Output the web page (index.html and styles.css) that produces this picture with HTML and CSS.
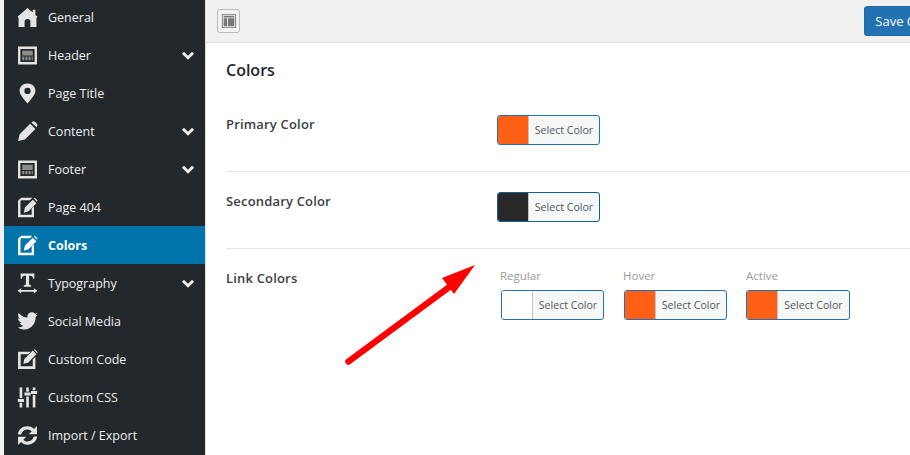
FILE: index.html
```html
<!DOCTYPE html>
<html lang="en">
<head>
<meta charset="utf-8">
<title>Colors</title>
<link rel="stylesheet" href="styles.css">
</head>
<body>
<div class="page">
  <nav class="sidebar">
    <a class="item"><svg class="icon" viewBox="0 0 20 20"><path d="M10 1 L15 5.300 V2.500 H17.500 V7.500 L19.500 9.300 L18.500 10.500 V19 H12.800 V14 Q12.800 11.500 10 11.500 Q7.200 11.500 7.200 14 V19 H1.500 V10.500 L.500 9.300 Z"/></svg><span class="name">General</span></a>
    <a class="item"><svg class="icon" viewBox="0 0 20 20"><path fill-rule="evenodd" d="M1 1.500 H19 V18.500 H1 Z M3.200 3.700 V16.300 H16.800 V3.700 Z"/><path class="dim" d="M5 5.500 H15 V10 H5 Z M5 11 H7 V14.500 H5 Z M8 11 H10 V14.500 H8 Z M11 11 H13 V14.500 H11 Z M14 11 H15 V14.500 H14 Z"/></svg><span class="name">Header</span><svg class="chev" viewBox="0 0 12 8"><path d="M1.500 1.500 L6 6 L10.500 1.500"/></svg></a>
    <a class="item"><svg class="icon" viewBox="0 0 20 20"><path fill-rule="evenodd" d="M10 .500 C5.500 .500 2.500 3.500 2.500 7.500 C2.500 11.500 7.500 16 10 19.500 C12.500 16 17.500 11.500 17.500 7.500 C17.500 3.500 14.500 .500 10 .500 Z M10 4.500 A3 3 0 1 1 10 10.500 A3 3 0 1 1 10 4.500 Z"/></svg><span class="name">Page Title</span></a>
    <a class="item"><svg class="icon" viewBox="0 0 20 20"><path d="M1 19 L2.500 12.500 L12.500 2.500 L17.500 7.500 L7.500 17.500 Z M13.700 1.500 L15 .500 Q16 0 17 .700 L19.300 3 Q19.800 4 19 5 L18.500 6 Z"/></svg><span class="name">Content</span><svg class="chev" viewBox="0 0 12 8"><path d="M1.500 1.500 L6 6 L10.500 1.500"/></svg></a>
    <a class="item"><svg class="icon" viewBox="0 0 20 20"><path fill-rule="evenodd" d="M1 1.500 H19 V18.500 H1 Z M3.200 3.700 V16.300 H16.800 V3.700 Z"/><path class="dim" d="M5 5.500 H15 V10.500 H5 Z M5 11.500 H7 V14.500 H5 Z M8 11.500 H10 V14.500 H8 Z M11 11.500 H13 V14.500 H11 Z M14 11.500 H15 V14.500 H14 Z"/></svg><span class="name">Footer</span><svg class="chev" viewBox="0 0 12 8"><path d="M1.500 1.500 L6 6 L10.500 1.500"/></svg></a>
    <a class="item"><svg class="icon" viewBox="0 0 20 20"><path d="M1 3.500 L4 .800 H14.500 L12.300 3 H4 L3.300 3.700 V17 H14 V11 L16.200 8.800 V19.200 H1 Z"/><path d="M6.500 15 L7.500 10 L15 2.500 L18.500 6 L11 13.500 Z M16 1.500 L17 .800 L19.500 3.300 L19 4.500 Z"/></svg><span class="name">Page 404</span></a>
    <a class="item active"><svg class="icon" viewBox="0 0 20 20"><path d="M1 3.500 L4 .800 H14.500 L12.300 3 H4 L3.300 3.700 V17 H14 V11 L16.200 8.800 V19.200 H1 Z"/><path d="M6.500 15 L7.500 10 L15 2.500 L18.500 6 L11 13.500 Z M16 1.500 L17 .800 L19.500 3.300 L19 4.500 Z"/></svg><span class="name">Colors</span></a>
    <a class="item"><svg class="icon" viewBox="0 0 20 20"><path d="M3.500 .500 H16.500 V5.500 H15.300 Q15.200 2.500 12.500 2.500 H11.500 V11 L13.500 12 V13 H6.500 V12 L8.500 11 V2.500 H7.500 Q4.800 2.500 4.700 5.500 H3.500 Z"/><path d="M.500 17 L4 14.500 V16.200 H16 V14.500 L19.500 17 L16 19.500 V17.800 H4 V19.500 Z"/></svg><span class="name">Typography</span><svg class="chev" viewBox="0 0 12 8"><path d="M1.500 1.500 L6 6 L10.500 1.500"/></svg></a>
    <a class="item"><svg class="icon" viewBox="0 0 20 20"><path d="M19.500 3.500 C18.900 4.500 18.200 5.200 17.700 5.600 C18 11 14 17.500 7 17.500 C4.500 17.500 2.500 16.800 .700 15.700 C2.800 15.900 4.700 15.300 6.200 14.100 C4.300 14 3 12.800 2.500 11.300 C3.100 11.400 3.700 11.400 4.300 11.200 C2.300 10.700 1 9 1 7 C1.600 7.300 2.200 7.500 2.900 7.500 C1 6.200 .500 3.800 1.600 1.900 C3.700 4.500 6.700 6.100 10 6.300 C9.500 3.600 11.500 1.300 14 1.300 C15.200 1.300 16.300 1.800 17 2.600 C17.900 2.400 18.700 2.100 19.400 1.600 C19.100 2.600 18.500 3.300 17.700 3.800 C18.400 3.800 19 3.700 19.500 3.500 Z"/></svg><span class="name">Social Media</span></a>
    <a class="item"><svg class="icon" viewBox="0 0 20 20"><path d="M1 2.500 H13 L10.500 5 H3.500 V16.500 H15 V10 L17.500 7.500 V19 H1 Z"/><path d="M6 14 L7 9.500 L15 1.500 L18.500 5 L10.500 13 Z M16 .800 L17 .200 L19.800 3 L19.200 4 Z"/></svg><span class="name">Custom Code</span></a>
    <a class="item"><svg class="icon" viewBox="0 0 20 20"><path d="M2.500 .500 H5 V10.500 H2.500 Z M2.500 15 H5 V19.500 H2.500 Z M.800 11.500 H6.700 V14.200 H.800 Z M8.800 .500 H11.300 V4.500 H8.800 Z M8.800 9 H11.300 V19.500 H8.800 Z M7.100 5.300 H13 V8.200 H7.100 Z M15 .500 H17.500 V3 H15 Z M15 7.500 H17.500 V19.500 H15 Z M13.400 3.700 H19.200 V6.700 H13.400 Z"/></svg><span class="name">Custom CSS</span></a>
    <a class="item"><svg class="icon" viewBox="0 0 20 20"><path d="M.800 9 C1.300 4.500 5 1.300 10 1.300 C12.500 1.300 14.700 2.300 16.200 3.800 L19 1 V8.800 H11.200 L14 6 C13 5 11.700 4.300 10 4.300 C7 4.300 4.700 6 4 9 Z"/><path d="M19.200 11 C18.700 15.500 15 18.700 10 18.700 C7.500 18.700 5.300 17.700 3.800 16.200 L1 19 V11.200 H8.800 L6 14 C7 15 8.300 15.700 10 15.700 C13 15.700 15.300 14 16 11 Z"/></svg><span class="name">Import / Export</span></a>
  </nav>
  <main class="main">
    <header class="topbar">
      <span class="toggle"><svg viewBox="0 0 18 18"><path fill-rule="evenodd" d="M1 1 H17 V17 H1 Z M2 2 V16 H16 V2 Z"/><path d="M3 3 H15 V5 H3 Z M3 6 H7 V15 H3 Z M8 6 H15 V15 H8 Z"/></svg></span>
      <button class="save">Save Changes</button>
    </header>
    <section class="content">
      <h1 class="title">Colors</h1>
      <div class="row first">
        <div class="label">Primary Color</div>
        <div class="picker"><span class="swatch orange"></span><span class="select">Select Color</span></div>
      </div>
      <div class="row second">
        <div class="label">Secondary Color</div>
        <div class="picker dark-border"><span class="swatch black"></span><span class="select">Select Color</span></div>
      </div>
      <div class="row third">
        <div class="label">Link Colors</div>
        <div class="links">
          <div class="link"><div class="sub">Regular</div><div class="picker"><span class="swatch white"></span><span class="select">Select Color</span></div></div>
          <div class="link"><div class="sub">Hover</div><div class="picker"><span class="swatch orange"></span><span class="select">Select Color</span></div></div>
          <div class="link"><div class="sub">Active</div><div class="picker"><span class="swatch orange"></span><span class="select">Select Color</span></div></div>
        </div>
      </div>
    </section>
    <svg class="arrow" viewBox="0 0 160 115"><path class="shaft" d="M18.500 106.500 L122 30"/><path class="head" d="M145 10 L112 23 L124 39 Z"/></svg>
  </main>
</div>
</body>
</html>
```
FILE: styles.css
```css
* { box-sizing: border-box; }
html, body { margin: 0; height: 100%; overflow: hidden; background: #f1f1f1; }
body { font-family: "Open Sans", "Noto Sans", sans-serif; font-size: 13px; color: #23282d; }
.page { display: flex; height: 455px; padding-left: 4px; }
.sidebar { width: 201px; flex: none; margin-top: -2px; height: 457px; background: #23282d; }
.item { display: flex; align-items: center; height: 38px; padding: 0 10px 0 13px; font-size: 12.500px; color: #eee; }
.item.active { background: #0073aa; color: #fff; font-weight: 700; }
.icon { width: 21px; height: 21px; flex: none; margin-right: 10px; fill: #e4e4e4; }
.active .icon { fill: #fff; }
.icon .dim { fill: #8d8d85; }
.name { flex: 1; white-space: nowrap; }
.chev { width: 14px; height: 9px; flex: none; fill: none; stroke: #eee; stroke-width: 2.600; }
.main { position: relative; flex: 1; min-width: 0; overflow: hidden; background: #fff; border-left: 1px solid #e0e0e0; }
.topbar { display: flex; align-items: center; height: 43px; padding-left: 11px; background: #f1f1f1; border-bottom: 1px solid #ddd; }
.toggle { display: flex; align-items: center; justify-content: center; width: 23px; height: 24px; border: 1px solid #bbb; border-radius: 3px; background: #f3f3f3; }
.toggle svg { width: 16px; height: 16px; fill: #777; }
.save { flex: none; margin-left: auto; margin-right: -59px; width: 105px; height: 30px; padding: 0 0 0 1px; border: 1px solid #1f6aa5; border-radius: 3px; background: #2271b1; color: #fff; font: 13px "Open Sans", sans-serif; text-align: center; white-space: nowrap; }
.content { padding-left: 20px; }
.title { margin: 0; padding-top: 16px; height: 49px; font-size: 16px; line-height: 22px; font-weight: 600; color: #23282d; }
.row { display: flex; }
.first { height: 80px; padding-top: 23px; border-bottom: 1px solid #e5e5e5; }
.second { height: 77px; padding-top: 20px; border-bottom: 1px solid #e5e5e5; }
.third { padding-top: 19px; }
.label { width: 271px; flex: none; font-weight: 600; letter-spacing: .180px; color: #3b4045; line-height: 18px; }
.third .label { margin-top: 1px; }
.picker { display: flex; width: 103px; height: 30px; overflow: hidden; border: 1px solid #2271b1; border-radius: 3px; background: #f6f7f7; }
.dark-border { border-color: #135e96; }
.swatch { width: 31px; flex: none; border-right: 1px solid #c3c4c7; }
.orange { background: #ff6015; }
.black { background: #282828; }
.white { background: #fff; }
.select { flex: 1; text-align: center; font-size: 10.600px; line-height: 28px; color: #50575e; white-space: nowrap; }
.links { display: flex; gap: 20px; margin-left: 4px; margin-top: -1px; }
.link:last-child { margin-left: -1px; }
.link:last-child .picker { width: 104px; }
.link:last-child .sub { margin-left: 0; }
.sub { height: 23px; margin-left: -1px; font-size: 11.500px; line-height: 17px; color: #9a9a9a; }
.arrow { position: absolute; left: 124px; top: 255px; width: 160px; height: 115px; }
.shaft { fill: none; stroke: #f00; stroke-width: 6.500; stroke-linecap: round; }
.head { fill: #f00; }
```
